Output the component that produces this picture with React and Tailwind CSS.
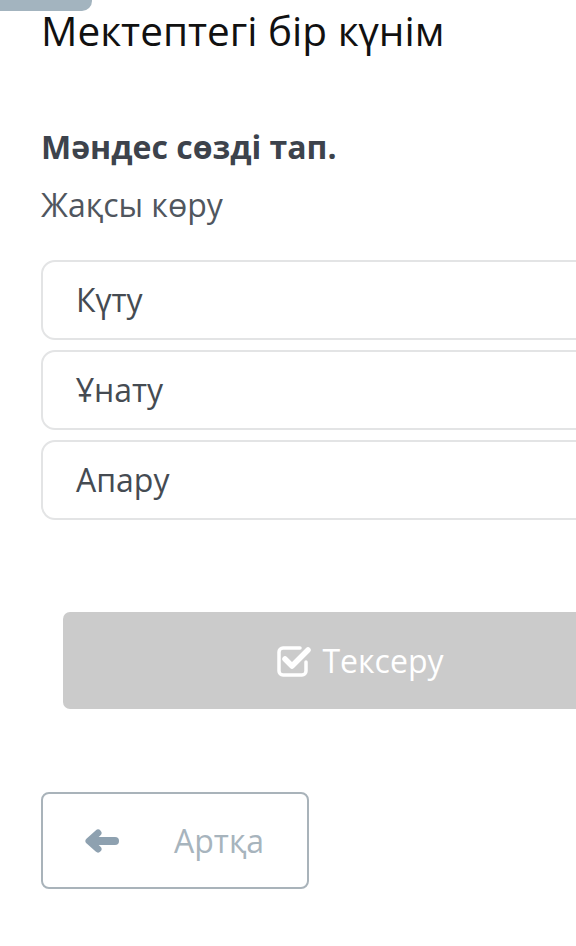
const options = ["Күту", "Ұнату", "Апару"];

function CheckIcon() {
  return (
    <svg viewBox="0 0 36 34" className="w-[36px] h-[34px]" fill="none">
      <path d="M24 4H7a4 4 0 0 0-4 4v19a4 4 0 0 0 4 4h19a4 4 0 0 0 4-4v-9" stroke="white" strokeWidth="3.5" strokeLinecap="round" />
      <path d="M9 15l7 7L32 6" stroke="white" strokeWidth="5.5" strokeLinecap="round" strokeLinejoin="round" />
    </svg>
  );
}

function ArrowIcon() {
  return (
    <svg viewBox="0 0 34 24" className="w-[34px] h-[24px]" fill="none">
      <path d="M13 4L4 12L13 20" stroke="#8ea1b0" strokeWidth="7" strokeLinecap="round" strokeLinejoin="round" />
      <path d="M7 12H30" stroke="#8ea1b0" strokeWidth="8" strokeLinecap="round" />
    </svg>
  );
}

export default function App() {
  return (
    <div className="relative w-[576px] h-[946px] overflow-hidden bg-white font-['Open_Sans',sans-serif]">
      <div className="absolute left-0 top-0 w-[92px] h-[11px] rounded-br-[10px] bg-[#a3b4bf]" />

      <div className="w-[680px] pl-[41px] pt-[4px]">
        <h1 className="text-[40.5px] leading-[54px] text-[#111]">Мектептегі бір күнім</h1>

        <div className="mt-[69px] text-[32px] leading-[40px] font-bold text-[#3d434c]">Мәндес сөзді тап.</div>
        <div className="mt-[17px] text-[32px] leading-[42px] text-[#50565e]">Жақсы көру</div>

        <div className="mt-[34px] flex flex-col gap-[10px] w-[620px]">
          {options.map((o) => (
            <div
              key={o}
              className="h-[80px] flex items-center pl-[33px] border-2 border-[#e3e4e5] rounded-[14px] text-[32px] text-[#454b52]"
            >
              {o}
            </div>
          ))}
        </div>

        <div className="ml-[22px] mt-[92px] w-[594px] h-[97px] rounded-[7px] bg-[#cbcbcb] flex items-center justify-center gap-[10px] text-white text-[32px]">
          <CheckIcon />
          <span>Тексеру</span>
        </div>

        <div className="mt-[83px] w-[268px] h-[97px] rounded-[8px] border-2 border-[#a9b3ba] flex items-center">
          <span className="ml-[42px] flex"><ArrowIcon /></span>
          <span className="ml-[55px] text-[32px] text-[#a7b4bd]">Артқа</span>
        </div>
      </div>
    </div>
  );
}
